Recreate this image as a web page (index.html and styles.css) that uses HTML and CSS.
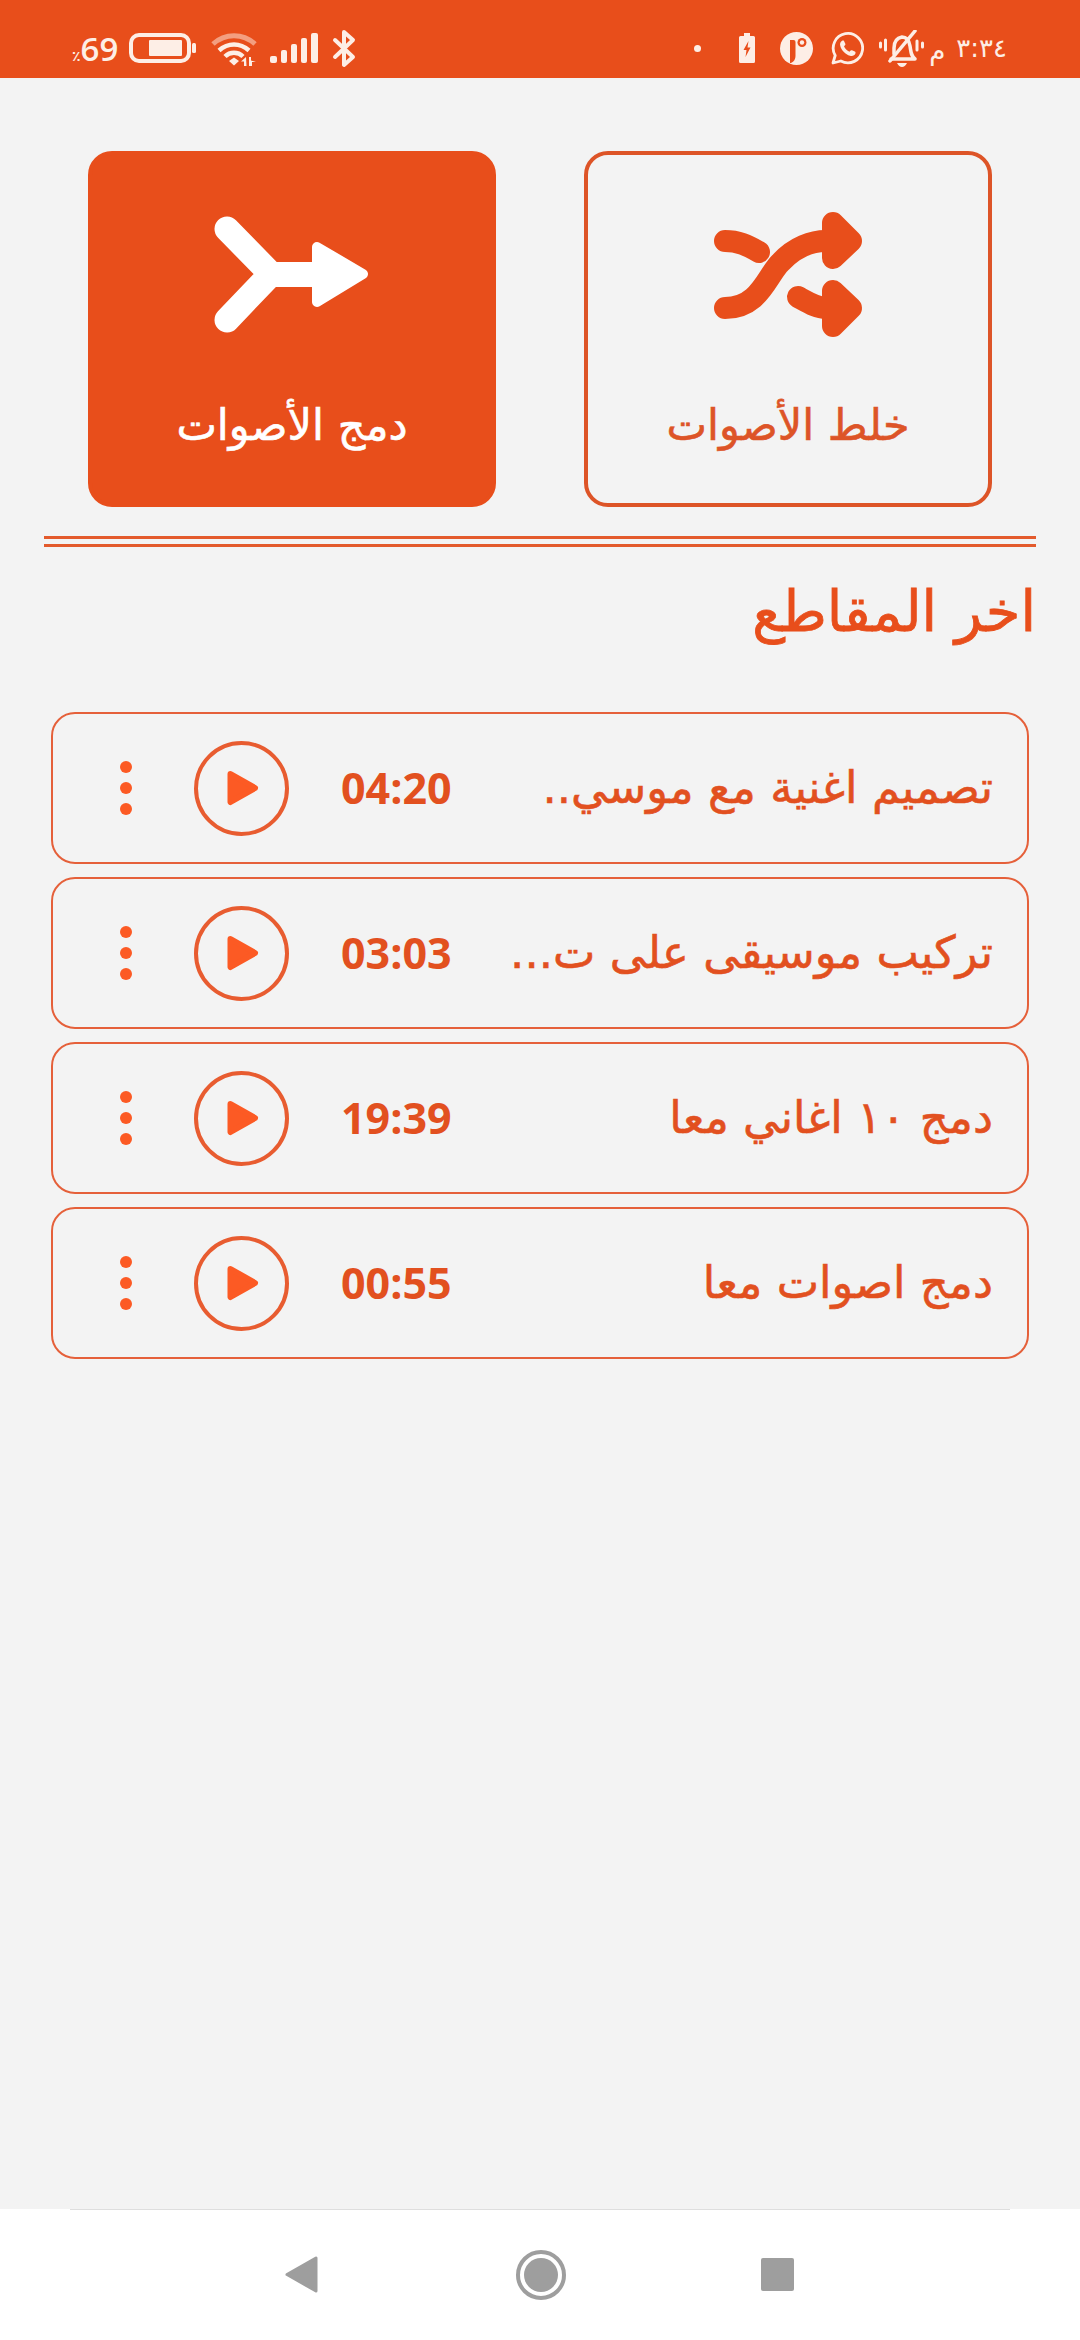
FILE: index.html
```html
<!DOCTYPE html>
<html lang="ar">
<head>
<meta charset="utf-8">
<title>دمج الأصوات</title>
<link rel="stylesheet" href="styles.css">
</head>
<body>
<div class="screen">
  <header class="status">
    <div class="status-left">
      <span class="pct"><span class="pct-sign">٪</span>69</span>
      <svg class="ic-batt" viewBox="0 0 68 30"><rect x="2" y="2" width="58" height="26" rx="8" fill="none" stroke="#fdeee6" stroke-width="4"/><rect x="20" y="7" width="33" height="16" rx="1" fill="#fdeee6"/><rect x="63" y="10" width="4" height="10" rx="1.5" fill="#fdeee6"/></svg>
      <svg class="ic-wifi" viewBox="0 0 46 33"><path d="M2 11C14 0 32 0 44 11" fill="none" stroke="#fdeee6" stroke-opacity=".5" stroke-width="5"/><path d="M8 17.500C17 9.500 29 9.500 38 17.500" fill="none" stroke="#fdeee6" stroke-width="4.500"/><path d="M14 23.500C19 18.500 27 18.500 32 23.500" fill="none" stroke="#fdeee6" stroke-width="4.500"/><path d="M18 28L23 24.500L28 28L23 32.500Z" fill="#fdeee6"/><path d="M35 24L30 28.500H33V33H35.500ZM38 33V24H40V27.500L45 29H41V33Z" fill="#fdeee6"/></svg>
      <svg class="ic-signal" viewBox="0 0 48 30" fill="#fdeee6"><rect x="0" y="23" width="7" height="7" rx="2"/><rect x="11" y="17" width="6" height="13" rx="2"/><rect x="21" y="11" width="6" height="19" rx="2"/><rect x="31" y="5" width="6" height="25" rx="2"/><rect x="41" y="0" width="7" height="30" rx="2"/></svg>
      <svg class="ic-bt" viewBox="0 0 24 39"><path d="M3 11L21 28L12 36V3L21 11L3 28" fill="none" stroke="#fdeee6" stroke-width="4" stroke-linejoin="round" stroke-linecap="round"/></svg>
    </div>
    <div class="status-right">
      <span class="dot"></span>
      <svg class="ic-charge" viewBox="0 0 16 30"><path d="M5 0H11V3H14.500Q16 3 16 4.500V28.500Q16 30 14.500 30H1.500Q0 30 0 28.500V4.500Q0 3 1.500 3H5Z" fill="#fdeee6"/><path d="M9.500 8L4.500 17H7.500L6.500 24L11.500 14.500H8.500Z" fill="#e94e1b"/></svg>
      <svg class="ic-app" viewBox="0 0 33 33"><circle cx="16.500" cy="16.500" r="16.500" fill="#fdeee6"/><path d="M10 8H13.500Q15.500 8 15.500 10V24Q15.500 29 11 31H10Z" fill="#e94e1b"/><circle cx="22" cy="10.500" r="4.500" fill="#e94e1b"/><circle cx="22" cy="10.500" r="2.200" fill="#fdeee6"/></svg>
      <svg class="ic-wa" viewBox="0 0 33 33"><path d="M2 31L4.200 23.500A14.700 14.700 0 1 1 9.800 29Z" fill="none" stroke="#fdeee6" stroke-width="2.800" stroke-linejoin="round"/><path d="M11.500 8.500C9.500 9.500 8.500 11.500 9.300 14C10.500 18.500 14.500 22.500 19 23.800C21.500 24.500 23.800 23.500 24.500 21.300C24.700 20.500 24.500 20 23.800 19.600L21 18.300C20.300 18 19.800 18.200 19.300 18.800L18.500 19.800C16 18.800 14 16.800 13 14.300L14 13.300C14.500 12.800 14.600 12.300 14.300 11.700L13 8.900C12.700 8.400 12.200 8.300 11.500 8.500Z" fill="#fdeee6"/></svg>
      <svg class="ic-bell" viewBox="0 0 45 37"><g fill="none" stroke="#fdeee6" stroke-linecap="round"><path d="M12 29H36C32 26 32 22 31 16C30 10 27 7 23 7C18 8 15 12 15 18V24" stroke-width="3.500" stroke-linejoin="round"/><path d="M11 31L36 1" stroke-width="3.500"/><path d="M1.500 13V17M6.500 10V20M38 11V20M43.500 13V17" stroke-width="3"/></g><path d="M18 33H28Q26 37 23 37T18 33Z" fill="#fdeee6"/></svg>
      <span class="clock"><span class="ampm">م</span><span class="clock-time">٣:٣٤</span></span>
    </div>
  </header>

  <main class="main">
    <section class="actions">
      <button class="action action-outline">
        <svg class="action-ic" viewBox="0 0 150 110">
          <g fill="none" stroke="#e84e1b" stroke-width="22" stroke-linecap="round">
            <path d="M12 26C25 26 34 30 46 37"/>
            <path d="M12 93C47 93 54 60 68 47C82 32 99 26 113 26"/>
            <path d="M85 82C96 88 104 93 113 93"/>
          </g>
          <g fill="#e84e1b" stroke="#e84e1b" stroke-width="22" stroke-linejoin="round">
            <path d="M120 8L138 26L120 43Z"/>
            <path d="M120 76L138 93L120 111Z"/>
          </g>
        </svg>
        <span class="action-label">خلط الأصوات</span>
      </button>
      <button class="action action-solid">
        <svg class="action-ic" viewBox="0 0 150 110">
          <path d="M10 14L54 59L10 105" fill="none" stroke="#fff" stroke-width="25" stroke-linecap="round" stroke-linejoin="miter"/>
          <path d="M50 47H102V72H50Z" fill="#fff"/>
          <path d="M100 32L146 59L100 87Z" fill="#fff" stroke="#fff" stroke-width="10" stroke-linejoin="round"/>
        </svg>
        <span class="action-label">دمج الأصوات</span>
      </button>
    </section>

    <div class="divider"></div>
    <h2 class="title">اخر المقاطع</h2>

    <ul class="list">
      <li class="row">
        <span class="row-name">تصميم اغنية مع موسي..</span>
        <span class="row-time">04:20</span>
        <span class="play"><svg viewBox="0 0 32 36"><path d="M3.500 4L28 18L3.500 32Z" fill="#fc5a24" stroke="#fc5a24" stroke-width="6" stroke-linejoin="round"/></svg></span>
        <span class="more"><i></i><i></i><i></i></span>
      </li>
      <li class="row">
        <span class="row-name">تركيب موسيقى على ت...</span>
        <span class="row-time">03:03</span>
        <span class="play"><svg viewBox="0 0 32 36"><path d="M3.500 4L28 18L3.500 32Z" fill="#fc5a24" stroke="#fc5a24" stroke-width="6" stroke-linejoin="round"/></svg></span>
        <span class="more"><i></i><i></i><i></i></span>
      </li>
      <li class="row">
        <span class="row-name">دمج ١٠ اغاني معا</span>
        <span class="row-time">19:39</span>
        <span class="play"><svg viewBox="0 0 32 36"><path d="M3.500 4L28 18L3.500 32Z" fill="#fc5a24" stroke="#fc5a24" stroke-width="6" stroke-linejoin="round"/></svg></span>
        <span class="more"><i></i><i></i><i></i></span>
      </li>
      <li class="row">
        <span class="row-name">دمج اصوات معا</span>
        <span class="row-time">00:55</span>
        <span class="play"><svg viewBox="0 0 32 36"><path d="M3.500 4L28 18L3.500 32Z" fill="#fc5a24" stroke="#fc5a24" stroke-width="6" stroke-linejoin="round"/></svg></span>
        <span class="more"><i></i><i></i><i></i></span>
      </li>
    </ul>
  </main>

  <nav class="navbar">
    <svg class="nav-back" viewBox="0 0 33 37"><path d="M31 2V35L2 18.500Z" fill="#9e9e9e" stroke="#9e9e9e" stroke-width="3" stroke-linejoin="round"/></svg>
    <span class="nav-home"><span></span></span>
    <span class="nav-recent"></span>
  </nav>
</div>
</body>
</html>
```
FILE: styles.css
```css
* { box-sizing: border-box; }
html, body { margin: 0; padding: 0; }
body {
  width: 1080px;
  height: 2340px;
  overflow: hidden;
  font-family: "DejaVu Sans", sans-serif;
  background: #f3f3f3;
}
.screen { width: 1080px; height: 2340px; display: flex; flex-direction: column; }

/* status bar */
.status {
  height: 78px;
  flex: none;
  background: #e84e1b;
  display: flex;
  justify-content: space-between;
  align-items: center;
  color: #fdeee6;
  padding: 18px 73px 0 72px;
}
.status-left, .status-right { display: flex; align-items: center; height: 60px; }
.status svg { display: block; flex: none; }
.pct { font-family: "Open Sans", sans-serif; font-weight: 600; font-size: 33px; line-height: 1; display: flex; align-items: baseline; width: 47px; }
.pct-sign { font-size: 14px; font-family: "DejaVu Sans", sans-serif; }
.ic-batt { width: 68px; height: 30px; margin-left: 10px; }
.ic-wifi { width: 46px; height: 33px; margin-left: 14px; margin-top: 2px; }
.ic-signal { width: 48px; height: 30px; margin-left: 13px; }
.ic-bt { width: 24px; height: 39px; margin-left: 14px; }
.dot { width: 7px; height: 7px; border-radius: 50%; background: #fdeee6; }
.ic-charge { width: 16px; height: 30px; margin-left: 38px; }
.ic-app { width: 33px; height: 33px; margin-left: 25px; }
.ic-wa { width: 33px; height: 33px; margin-left: 18px; }
.ic-bell { width: 45px; height: 37px; margin-left: 15px; }
.clock { display: flex; align-items: center; direction: ltr; margin-left: 5px; }
.ampm { font-size: 26px; margin-right: 11px; margin-top: 6px; }
.clock-time { font-size: 26px; }

/* main */
.main { flex: 1; min-height: 0; padding-top: 73px; }
.actions { display: flex; flex-direction: row-reverse; justify-content: center; gap: 88px; }
.action {
  width: 408px;
  height: 356px;
  border-radius: 24px;
  padding: 0;
  display: flex;
  flex-direction: column;
  align-items: center;
  font: inherit;
}
.action-outline { background: transparent; border: 4px solid #dd5427; color: #dd5427; }
.action-solid { background: #e84e1b; border: 4px solid #e84e1b; color: #fff; }
.action-ic { width: 150px; height: 110px; margin-top: 60px; overflow: visible; flex: none; }
.action-label { font-size: 43px; line-height: 60px; margin-top: 70px; -webkit-text-stroke: 0.6px currentColor; }

.divider {
  height: 11px;
  margin: 29px 44px 0;
  border-top: 3px solid #e35a2c;
  border-bottom: 3px solid #e35a2c;
}
.title {
  direction: rtl;
  margin: 26px 44px 0;
  font-size: 56px;
  line-height: 78px;
  font-weight: 400;
  color: #e84e1b;
  -webkit-text-stroke: 0.8px currentColor;
}

.list {
  list-style: none;
  direction: rtl;
  margin: 61px 51px 0;
  padding: 0;
  display: flex;
  flex-direction: column;
  gap: 13px;
}
.row {
  height: 152px;
  border: 2px solid #e5603a;
  border-radius: 24px;
  display: flex;
  align-items: center;
  padding: 0 34px 0 67px;
}
.row-name {
  flex: 1;
  font-size: 45px;
  line-height: 60px;
  color: #e2501f;
  white-space: nowrap;
  -webkit-text-stroke: 0.6px currentColor;
}
.row-time {
  font-family: "Open Sans", sans-serif;
  font-size: 43px;
  font-weight: 700;
  direction: ltr;
  color: #e2501f;
  line-height: 56px;
}
.play {
  width: 95px;
  height: 95px;
  margin-right: 52px;
  border: 4px solid #e85c30;
  border-radius: 50%;
  display: flex;
  align-items: center;
  justify-content: center;
  padding-left: 3px;
}
.play svg { width: 32px; height: 36px; display: block; }
.more { display: flex; flex-direction: column; gap: 9px; margin-right: 62px; }
.more i { display: block; width: 12px; height: 12px; border-radius: 50%; background: #fc5a24; }

/* nav */
.navbar {
  height: 131px;
  flex: none;
  background: #fff;
  display: flex;
  align-items: center;
  padding-left: 285px;
  position: relative;
}
.navbar::before {
  content: "";
  position: absolute;
  left: 70px;
  right: 70px;
  top: 0;
  height: 1px;
  background: #dedede;
}
.nav-back { width: 33px; height: 37px; display: block; }
.nav-home {
  width: 50px;
  height: 50px;
  margin-left: 198px;
  border-radius: 50%;
  border: 4px solid #9e9e9e;
  display: flex;
  align-items: center;
  justify-content: center;
}
.nav-home span { width: 34px; height: 34px; border-radius: 50%; background: #9e9e9e; display: block; }
.nav-recent { width: 33px; height: 33px; margin-left: 195px; background: #9e9e9e; border-radius: 2px; }
```
